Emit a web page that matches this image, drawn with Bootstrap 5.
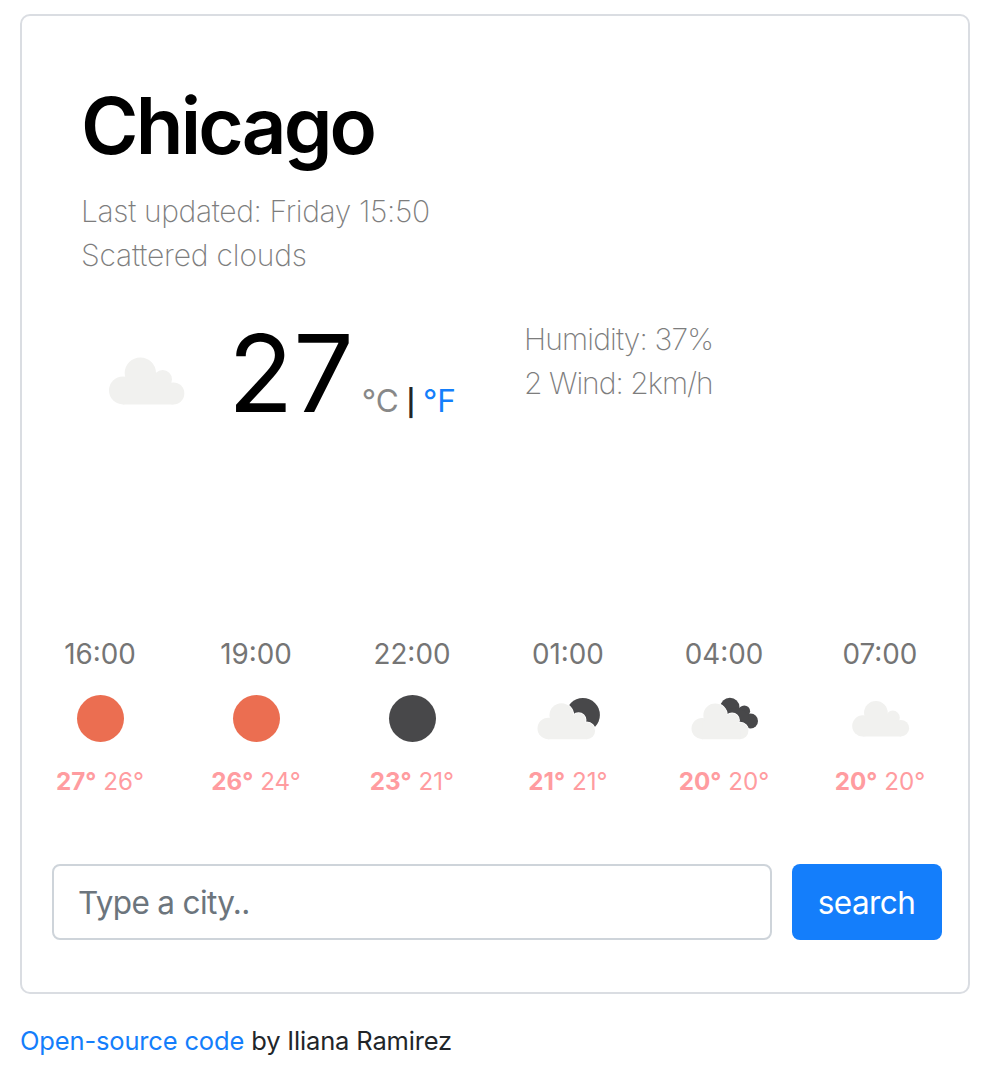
<!DOCTYPE html>
<html lang="en">
<head>
<meta charset="utf-8">
<meta name="viewport" content="width=device-width, initial-scale=1">
<title>Weather</title>
<link href="https://cdn.jsdelivr.net/npm/bootstrap@5.3.0/dist/css/bootstrap.min.css" rel="stylesheet">
<style>
  body { font-family: Inter, "Liberation Sans", sans-serif; color: #212529; background: #fff; }
  a { color: #147efb; text-decoration: none; }
  .weather-app { margin: 14px 22px 0 20px; height: 980px; border: 2px solid #dadde2; border-radius: 10px; }
  .overview { padding: 60px 59px 0; height: 287px; }
  .city { font-size: 78px; font-weight: 600; line-height: 96px; letter-spacing: -2.8px; color: #000; margin: 2px 0 15px 0; }
  .detail { font-size: 30px; font-weight: 200; line-height: 44px; letter-spacing: -.35px; color: #7d7d7d; }
  .detail-loose { letter-spacing: -.17px; }
  .detail-humidity { letter-spacing: -.85px; }
  .detail-wind { letter-spacing: -1px; }
  .current { padding-left: 60px; height: 319px; }
  .main-icon { width: 100px; height: 100px; margin: 18px 0 0 7px; flex: none; }
  .degrees { font-size: 107px; font-weight: 400; line-height: 128px; color: #000; }
  .units { font-size: 31.5px; line-height: 40px; margin-left: 8px; word-spacing: -1.5px; }
  .unit-on { color: #888; }
  .unit-bar { font-size: 26px; font-weight: 600; }
  .temp-block { width: 296px; margin: 6px 0 0 39px; }
  .humidity-block { margin-top: 14px; }
  .forecast { width: 936px; }
  .hour { font-size: 27.8px; line-height: 42px; color: #757575; margin-top: 11px; }
  .slot-icon { width: 80px; height: 76px; display: block; margin: 5px auto 0; }
  .range { font-size: 24.2px; line-height: 36px; color: #ff9ca0; margin-top: 8px; }
  .search-form { padding: 64px 26px 0 30px; gap: 20px; }
  .city-input { width: 720px; height: 76px; font-size: 31.5px; letter-spacing: -.65px; border: 2px solid #ced4da; border-radius: 8px; padding: 0 24px; }
  .city-input::placeholder { color: #6c757d; }
  .search-btn { width: 150px; height: 76px; font-size: 31.5px; letter-spacing: -.6px; padding: 2px 1px 0 0; border: 0; border-radius: 8px; background: #147efb; color: #fff; }
  .credit { font-size: 25.5px; line-height: 38px; letter-spacing: -.16px; margin: 28px 0 0 20px; }
</style>
</head>
<body>
<svg width="0" height="0" class="position-absolute" aria-hidden="true">
  <defs>
    <g id="cloud">
      <circle cx="42" cy="99" r="42"/>
      <circle cx="94" cy="47" r="47"/>
      <circle cx="161" cy="66" r="28"/>
      <circle cx="193" cy="108" r="33"/>
      <path d="M42 141V66H170L193 108V141Z"/>
    </g>
  </defs>
</svg>
<main class="weather-app">
  <section class="overview">
    <h1 class="city">Chicago</h1>
    <div class="detail">Last updated: Friday 15:50</div>
    <div class="detail detail-loose">Scattered clouds</div>
  </section>
  <section class="current d-flex align-items-start">
    <svg class="main-icon" viewBox="0 0 100 100"><use href="#cloud" transform="translate(20 36.4) scale(.3333)" fill="#f1f1ef"/></svg>
    <div class="temp-block d-flex align-items-baseline">
      <span class="degrees">27</span>
      <span class="units text-nowrap"><span class="unit-on">°C</span> <span class="unit-bar">|</span> <a href="#">°F</a></span>
    </div>
    <div class="humidity-block">
      <div class="detail detail-humidity">Humidity: 37%</div>
      <div class="detail detail-wind">2 Wind: 2km/h</div>
    </div>
  </section>
  <section class="forecast row g-0 text-center">
    <div class="col-2">
      <div class="hour">16:00</div>
      <svg class="slot-icon" viewBox="0 0 80 76"><circle cx="40.5" cy="38.5" r="23.5" fill="#eb6e51"/></svg>
      <div class="range"><b>27°</b> 26°</div>
    </div>
    <div class="col-2">
      <div class="hour">19:00</div>
      <svg class="slot-icon" viewBox="0 0 80 76"><circle cx="40.5" cy="38.5" r="23.5" fill="#eb6e51"/></svg>
      <div class="range"><b>26°</b> 24°</div>
    </div>
    <div class="col-2">
      <div class="hour">22:00</div>
      <svg class="slot-icon" viewBox="0 0 80 76"><circle cx="40.5" cy="38.5" r="23.5" fill="#48484a"/></svg>
      <div class="range"><b>23°</b> 21°</div>
    </div>
    <div class="col-2">
      <div class="hour">01:00</div>
      <svg class="slot-icon" viewBox="0 0 80 76">
        <circle cx="54.9" cy="35" r="17" fill="#48484a"/>
        <use href="#cloud" transform="translate(9.5 23.2) scale(.255)" fill="#fff" stroke="#fff" stroke-width="6"/>
        <use href="#cloud" transform="translate(9.5 23.2) scale(.255)" fill="#f1f1ef"/>
      </svg>
      <div class="range"><b>21°</b> 21°</div>
    </div>
    <div class="col-2">
      <div class="hour">04:00</div>
      <svg class="slot-icon" viewBox="0 0 80 76">
        <g fill="#48484a">
          <circle cx="45.9" cy="27.3" r="9.6"/>
          <circle cx="60.3" cy="31.2" r="5.8"/>
          <circle cx="66.6" cy="41" r="7.4"/>
          <path d="M40 30L54.5 27.5L65 34L64 47L50 46Z"/>
        </g>
        <use href="#cloud" transform="translate(7.5 23.6) scale(.252)" fill="#fff" stroke="#fff" stroke-width="6"/>
        <use href="#cloud" transform="translate(7.5 23.6) scale(.252)" fill="#f1f1ef"/>
      </svg>
      <div class="range"><b>20°</b> 20°</div>
    </div>
    <div class="col-2">
      <div class="hour">07:00</div>
      <svg class="slot-icon" viewBox="0 0 80 76"><use href="#cloud" transform="translate(12.2 21) scale(.252)" fill="#f1f1ef"/></svg>
      <div class="range"><b>20°</b> 20°</div>
    </div>
  </section>
  <form class="search-form d-flex">
    <input type="text" class="city-input form-control flex-shrink-0" placeholder="Type a city.." aria-label="City">
    <button type="button" class="search-btn btn btn-primary">search</button>
  </form>
</main>
<p class="credit"><a href="#">Open-source code</a> by Iliana Ramirez</p>
<script src="https://cdn.jsdelivr.net/npm/bootstrap@5.3.0/dist/js/bootstrap.bundle.min.js"></script>
</body>
</html>
